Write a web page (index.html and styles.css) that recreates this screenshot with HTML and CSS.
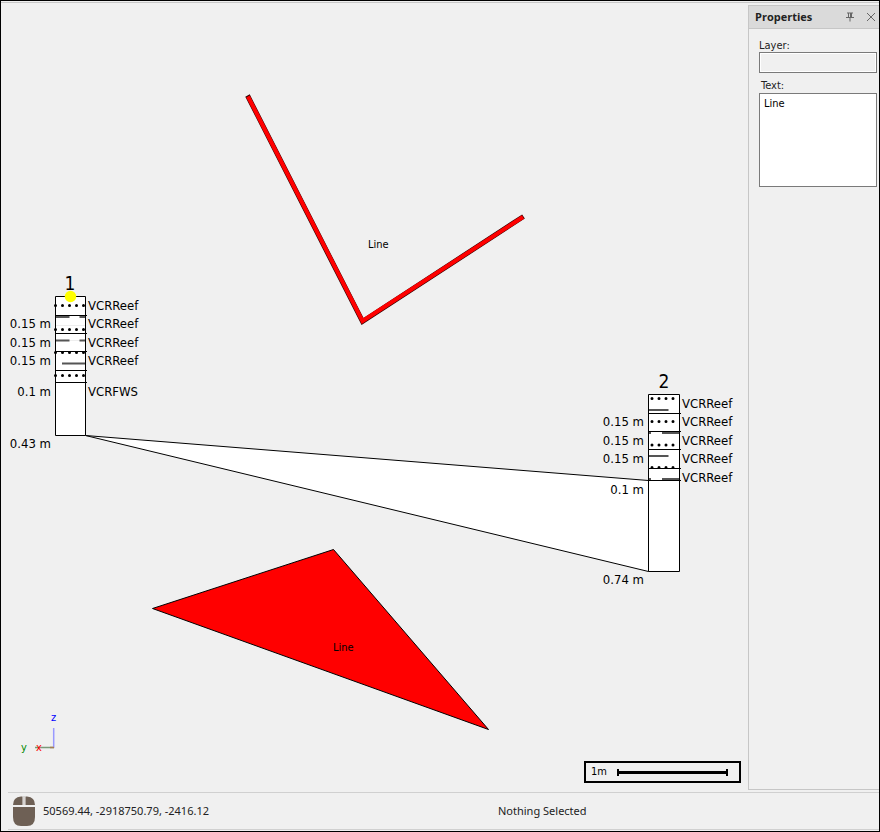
FILE: index.html
```html
<!DOCTYPE html>
<html lang="en">
<head>
<meta charset="utf-8">
<title>Section view</title>
<link rel="stylesheet" href="styles.css">
</head>
<body>
<div class="window">
  <div class="workspace">
    <main class="viewport">
      <svg class="drawing" aria-label="Section drawing">
        <g transform="translate(-1 -3)">
          <path class="outline" d="M247.500 95.500L362.500 321.500L523.500 216.500"/>
          <path class="polyline" d="M248 96.500L362.500 321L523 217"/>
          <text class="note" x="368" y="248">Line</text>

          <path class="area" d="M152.500 608.500L333.500 549.500L488.500 729.500Z"/>
          <text class="note" x="333" y="651">Line</text>

          <path class="seam" d="M85.500 435.500L648.500 480.500V571.500Z"/>

          <g class="column">
            <path class="box" d="M55.500 296.500H85.500V435.500H55.500Z"/>
            <path class="faint" d="M56 325.500H85M56 340.500H85"/>
            <path class="dash" d="M56 317H69.500M79.500 317H85M56 340.500H69.500M79.500 340.500H85M62 363.500H85"/>
            <path class="dots" d="M55.500 305.500H85M55.500 329.500H85M55.500 352.500H85M55.500 375.500H85"/>
            <path class="rule" d="M55 315.500H87M55 333.500H87M55 351.500H87M55 370.500H87M55 382.500H87"/>
            <circle class="marker" cx="70.500" cy="296.500" r="5.700"/>
            <text class="title" x="70" y="290">1</text>
            <g class="depth">
              <text x="51" y="328">0.15 m</text>
              <text x="51" y="347">0.15 m</text>
              <text x="51" y="365">0.15 m</text>
              <text x="51" y="396">0.1 m</text>
              <text x="51" y="448">0.43 m</text>
            </g>
            <g>
              <text x="88" y="310">VCRReef</text>
              <text x="88" y="328">VCRReef</text>
              <text x="88" y="347">VCRReef</text>
              <text x="88" y="365">VCRReef</text>
              <text x="88" y="396">VCRFWS</text>
            </g>
          </g>

          <g class="column">
            <path class="box" d="M648.500 394.500H679.500V571.500H648.500Z"/>
            <path class="dash" d="M649 410H668.500M649 433H651M662 433H679M649 456H668.500M649 479H651M662 479H679"/>
            <path class="dots" d="M652 398.500H675M652 421.500H675M652 445H675M652 467.500H675"/>
            <path class="rule" d="M648 413.500H681M648 431.500H681M648 449.500H681M648 468.500H681M648 480.500H681"/>
            <text class="title" x="664" y="388">2</text>
            <g class="depth">
              <text x="644" y="426">0.15 m</text>
              <text x="644" y="445">0.15 m</text>
              <text x="644" y="463">0.15 m</text>
              <text x="644" y="494">0.1 m</text>
              <text x="644" y="584">0.74 m</text>
            </g>
            <g>
              <text x="682" y="408">VCRReef</text>
              <text x="682" y="426">VCRReef</text>
              <text x="682" y="445">VCRReef</text>
              <text x="682" y="463">VCRReef</text>
              <text x="682" y="482">VCRReef</text>
            </g>
          </g>
        </g>
      </svg>

      <svg class="axes" width="44" height="44" aria-label="Axes">
        <path class="axis-y" d="M15 37.500H34"/>
        <path class="axis-z" d="M33.700 18V38"/>
        <path class="axis-x" d="M30 37.500H34"/>
        <text class="label-z" x="31" y="11">z</text>
        <text class="label-y" x="1" y="41">y</text>
        <text class="label-x" x="16" y="41">x</text>
      </svg>

      <div class="scale">
        <span>1m</span>
        <i class="scale-bar"></i>
      </div>
    </main>

    <aside class="panel">
      <header class="panel-head">
        <h2>Properties</h2>
        <button type="button" aria-label="Pin">
          <svg width="8" height="10"><path d="M1 1H7M2.500 1V5M5.500 1V5M4.500 1V5M0 5.500H8M4 6V9.500"/></svg>
        </button>
        <button type="button" aria-label="Close">
          <svg width="10" height="10"><path d="M1 1L9 9M9 1L1 9"/></svg>
        </button>
      </header>
      <form class="fields">
        <label for="layer">Layer:</label>
        <input id="layer" type="text" readonly>
        <label class="text-label" for="text">Text:</label>
        <textarea id="text">Line</textarea>
      </form>
    </aside>
  </div>

  <footer class="status">
    <svg class="mouse" width="22" height="30" aria-hidden="true">
      <path d="M9.500 .5V9H0Q0 1 8 .5ZM12.500 .5H14Q22 1 22 9H12.500Z"/>
      <path d="M10.500 0H11.500V9H10.500Z" opacity=".4"/>
      <path d="M0 11H22V21Q22 30 14 30H8Q0 30 0 21Z"/>
    </svg>
    <span class="coords">50569.44, -2918750.79, -2416.12</span>
    <span class="selection">Nothing Selected</span>
  </footer>
</div>
</body>
</html>
```
FILE: styles.css
```css
* { box-sizing: border-box; }

body {
  margin: 0;
  background: #f0f0f0;
  color: #222;
  font: 11px/16px "Noto Sans", sans-serif;
}

.window {
  display: flex;
  flex-direction: column;
  height: 100vh;
  padding: 1px 0 1px;
  border: 1px solid #000;
}

.workspace {
  display: flex;
  flex: 1;
  min-height: 0;
  border-top: 1px solid #c8c8c8;
}

.viewport {
  position: relative;
  flex: 1;
  min-width: 0;
}

.drawing {
  display: block;
  width: 100%;
  height: 100%;
  fill: #000;
  font: 13px "DejaVu Sans Condensed", "DejaVu Sans", sans-serif;
}

.note { font-size: 11px; }
.outline { fill: none; stroke: #300; stroke-width: 5; }
.polyline { fill: none; stroke: #f00; stroke-width: 4; }
.area { fill: #f00; stroke: #000; }
.seam, .box { fill: #fff; stroke: #000; }
.rule { stroke: #000; }
.faint { stroke: #eee; }
.dash { stroke: #555; stroke-width: 2; }
.dots {
  stroke: #000;
  stroke-width: 3;
  stroke-linecap: round;
  stroke-dasharray: 0 7;
}
.marker { fill: #ff0; }
.title { font-size: 19px; text-anchor: middle; }
.depth { text-anchor: end; }

.axes {
  position: absolute;
  left: 19px;
  bottom: 38px;
  font: 11px "DejaVu Sans Condensed", "DejaVu Sans", sans-serif;
}
.axis-z { stroke: #99f; stroke-width: 1.500; }
.axis-y { stroke: #7a9a7a; stroke-width: 1.500; }
.axis-x { stroke: #a67c52; stroke-width: 1.500; }
.label-z { fill: #00f; }
.label-y { fill: #080; }
.label-x { fill: #f00; }

.scale {
  position: absolute;
  right: 7px;
  bottom: 9px;
  display: flex;
  align-items: center;
  gap: 10px;
  width: 157px;
  height: 22px;
  padding: 0 11px 0 5px;
  border: 2px solid #000;
  color: #000;
  font: 11px/16px "DejaVu Sans Condensed", "DejaVu Sans", sans-serif;
}

.scale-bar {
  flex: 1;
  height: 7px;
  border: solid #000;
  border-width: 0 2px;
  background: linear-gradient(#000, #000) center / 100% 3px no-repeat;
}

.panel {
  width: 131px;
  margin: 2px 0 2px;
  border: 1px solid #c6c6c6;
  border-right: 0;
}

.panel-head {
  display: flex;
  align-items: center;
  gap: 12px;
  height: 23px;
  padding: 0 3px 0 6px;
  border-bottom: 1px solid #c6c6c6;
  background: #dadada;
}

h2 {
  flex: 1;
  margin: 0;
  font: bold 11px/16px "Open Sans", "Noto Sans", sans-serif;
}

button {
  display: flex;
  padding: 0;
  border: 0;
  background: none;
}

button path { fill: none; stroke: #666; }

.fields {
  display: flex;
  flex-direction: column;
  padding: 10px 2px 0 10px;
  font: 11px/13px "DejaVu Sans Condensed", "DejaVu Sans", sans-serif;
}

.text-label { margin: 6px 0 0 2px; }

input, textarea {
  display: block;
  width: 100%;
  margin: 0;
  border: 1px solid #7a7a7a;
  border-radius: 0;
  background: #fff;
  color: #000;
  font: inherit;
  outline: 0;
}

input {
  height: 21px;
  background: #f0f0f0;
  box-shadow: inset 0 0 0 1px #fff;
}

textarea {
  height: 94px;
  margin-top: 1px;
  padding: 3px 4px;
  resize: none;
}

.status {
  display: flex;
  align-items: center;
  height: 38px;
  margin-left: 7px;
  padding-left: 5px;
  border: solid #d0d0d0;
  border-width: 1px 0;
}

.mouse { fill: #6e6055; }
.coords { flex: 1; margin-left: 8px; }
.selection { flex: 0 0 381px; }
```
